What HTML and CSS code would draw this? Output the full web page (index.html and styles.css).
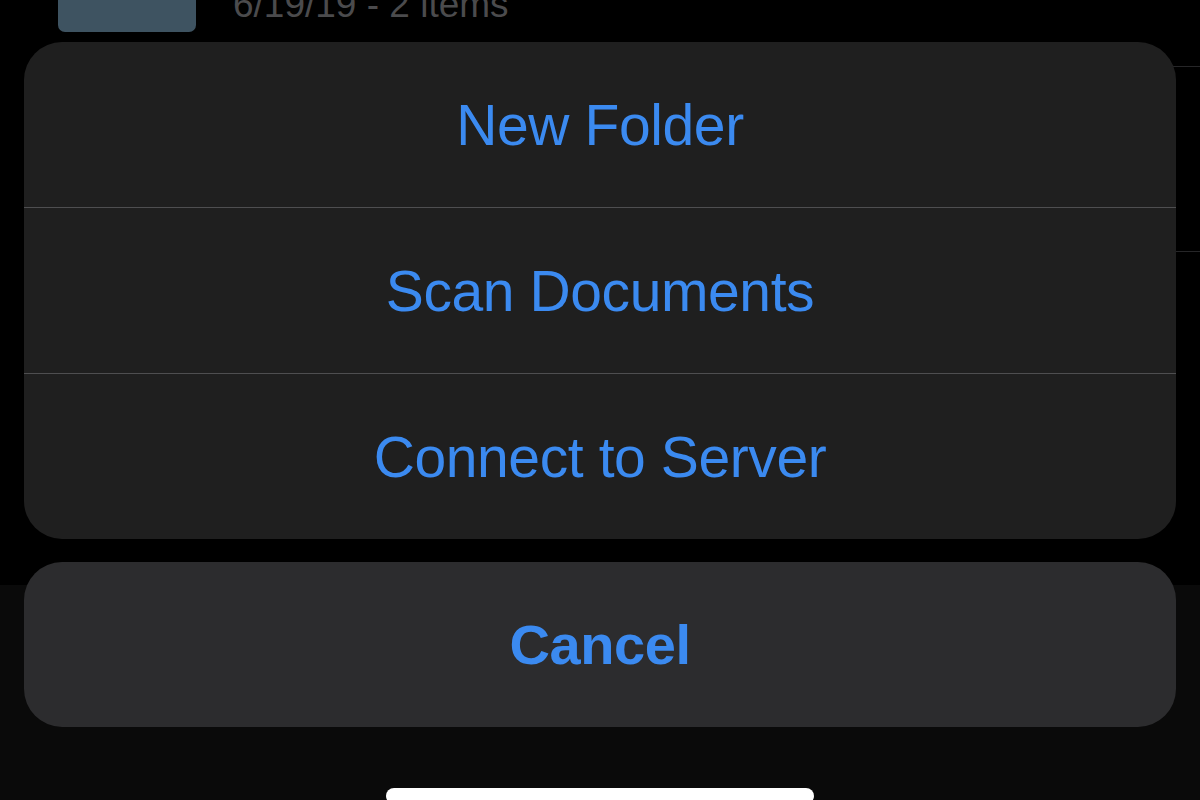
FILE: index.html
```html
<!DOCTYPE html>
<html lang="en">
<head>
<meta charset="utf-8">
<title>Action Sheet</title>
<link rel="stylesheet" href="styles.css">
</head>
<body>
<div class="screen">
  <div class="list">
    <div class="cell">
      <div class="thumb"></div>
      <div class="meta">6/19/19 - 2 items</div>
    </div>
    <div class="sep sep-first"></div>
    <div class="sep sep-second"></div>
    <div class="toolbar">
      <div class="home-indicator"></div>
    </div>
  </div>

  <div class="sheet">
    <div class="group">
      <div class="action">New Folder</div>
      <div class="divider"></div>
      <div class="action">Scan Documents</div>
      <div class="divider"></div>
      <div class="action">Connect to Server</div>
    </div>
    <div class="cancel">Cancel</div>
  </div>
</div>
</body>
</html>
```

FILE: styles.css
```css
html, body {
  margin: 0;
  padding: 0;
  background: #000;
  overflow: hidden;
}

.screen {
  position: relative;
  width: 1200px;
  height: 800px;
  font-family: "Liberation Sans", Arial, sans-serif;
}

.list {
  display: flex;
  flex-direction: column;
  height: 800px;
}

.cell {
  display: flex;
  height: 32px;
}

.thumb {
  margin-left: 58px;
  width: 138px;
  height: 32px;
  background: #3e5361;
  border-radius: 0 0 7px 7px;
}

.meta {
  margin-left: 37px;
  margin-top: -14px;
  font-size: 37px;
  line-height: 37px;
  color: #4b4b4d;
  white-space: nowrap;
}

.sep {
  height: 1px;
  margin-left: 233px;
  background: #262628;
}

.sep-first {
  margin-top: 34px;
}

.sep-second {
  margin-top: 184px;
}

.toolbar {
  margin-top: auto;
  height: 215px;
  background: #0a0a0a;
  display: flex;
  flex-direction: column;
  align-items: center;
  padding-top: 203px;
  box-sizing: border-box;
}

.home-indicator {
  width: 428px;
  height: 16px;
  flex: none;
  background: #fff;
  border-radius: 8px;
}

.sheet {
  position: absolute;
  top: 42px;
  left: 24px;
  right: 24px;
  display: flex;
  flex-direction: column;
  gap: 23px;
}

.group {
  background: #1f1f1f;
  border-radius: 38px;
  overflow: hidden;
  display: flex;
  flex-direction: column;
}

.action,
.cancel {
  height: 165px;
  display: flex;
  align-items: center;
  justify-content: center;
  color: #3b8af0;
  font-size: 57px;
  letter-spacing: -0.4px;
  white-space: nowrap;
}

.divider {
  height: 1px;
  background: #4e4e50;
}

.cancel {
  background: #2c2c2e;
  border-radius: 38px;
  font-weight: bold;
  font-size: 56px;
}
```
